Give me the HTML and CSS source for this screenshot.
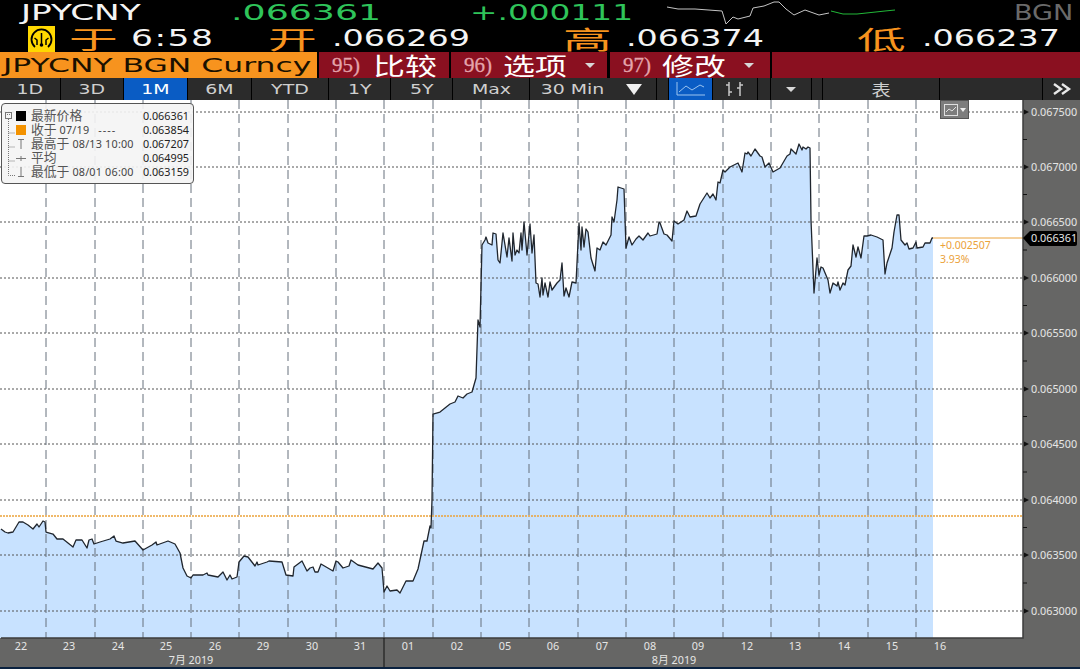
FILE: index.html
```html
<!DOCTYPE html>
<html lang="zh">
<head>
<meta charset="utf-8">
<title>JPYCNY</title>
<link rel="stylesheet" href="styles.css">
</head>
<body>
<header class="quote">
  <div class="row-top">
    <span class="big white s156">JPYCNY</span>
    <span class="big green s160">.066361</span>
    <span class="big green s146">+.000111</span>
    <svg class="spark" width="240" height="24" viewBox="665 0 240 24">
      <polyline class="spark-gray" points="667,6 678,8 695,8 722,10 726,23 733,16 738,18 750,15 753,7 764,5 774,1 779,1 786,8 794,14 805,9 819,14 829,12"/>
      <polyline class="spark-green" points="831,10 843,13 857,13 885,10 895,9"/>
    </svg>
    <span class="big gray s123">BGN</span>
  </div>
  <div class="row-stats">
    <svg class="gauge" width="27" height="26" viewBox="0 0 27 26">
      <rect width="27" height="26" fill="#ffd800"/>
      <path d="M7 21 A10 10 0 1 1 20 21" fill="none" stroke="#000" stroke-width="1.800"/>
      <path d="M13.500 7 V19 M6.500 12 L9 14 V19 M20.500 12 L18 14 V19" stroke="#000" stroke-width="1.500" fill="none"/>
      <circle cx="13.500" cy="19" r="1.800" fill="#000"/>
    </svg>
    <span class="cjk-label">于</span>
    <span class="big white s158">6:58</span>
    <span class="cjk-label">开</span>
    <span class="big white s145">.066269</span>
    <span class="cjk-label">高</span>
    <span class="big white s145">.066374</span>
    <span class="cjk-label">低</span>
    <span class="big white s145">.066237</span>
  </div>
  <div class="row-actions">
    <div class="ticker"><span class="ticker-text">JPYCNY BGN Curncy</span></div>
    <div class="action act-95"><span class="num">95)</span><span class="act-cjk">比较</span></div>
    <div class="action act-96"><span class="num">96)</span><span class="act-cjk">选项</span><i class="caret"></i></div>
    <div class="action act-97"><span class="num">97)</span><span class="act-cjk">修改</span><i class="caret"></i></div>
    <div class="action-fill"></div>
  </div>
  <nav class="tabs">
    <div class="tab w60"><span>1D</span></div>
    <div class="tab w62"><span>3D</span></div>
    <div class="tab w63 on"><span>1M</span></div>
    <div class="tab w63"><span>6M</span></div>
    <div class="tab w76"><span>YTD</span></div>
    <div class="tab w61"><span>1Y</span></div>
    <div class="tab w61"><span>5Y</span></div>
    <div class="tab w76"><span>Max</span></div>
    <div class="tab w126 period"><span>30 Min</span><i class="caret-lg"></i></div>
    <div class="tab w11"></div>
    <div class="tab w43 on">
      <svg width="30" height="14" viewBox="0 0 30 14"><path d="M1 0 V13 H29 M3 10 L10 4 L16 8 L24 3 L28 5" fill="none" stroke="#9cc4f0" stroke-width="1"/></svg>
    </div>
    <div class="tab w44">
      <svg width="22" height="16" viewBox="0 0 22 16"><path d="M5 1 V15 M2 4 H5 M5 11 H8 M16 1 V15 M13 7 H16 M16 4 H19" fill="none" stroke="#c8c8c8" stroke-width="1.500"/></svg>
    </div>
    <div class="tab w12"></div>
    <div class="tab w40"><i class="caret"></i></div>
    <div class="tab w10"></div>
    <div class="tab w116"><span class="tab-cjk">表</span></div>
    <div class="tab w102"></div>
    <div class="tab grow">
      <svg width="20" height="12" viewBox="0 0 20 12"><path d="M2 1 L9 6 L2 11 M10 1 L17 6 L10 11" fill="none" stroke="#e8e8e8" stroke-width="2.400"/></svg>
    </div>
  </nav>
</header>

<main class="chart">
  <svg class="plot" width="1080" height="569" viewBox="0 100 1080 569">
    <rect class="axis-bg" x="0" y="100" width="1080" height="567"/>
    <rect class="plot-bg" x="0" y="100" width="1023" height="538"/>
    <polygon class="area" points="0,638 0,529 5,532 8,533 13,532 19,522 23,522 28,525 33,529 37,524 39,527 43,521 45,522 46,532 53,534 57,539 63,539 73,547 76,540 82,540 87,548 89,540 92,539 94,544 100,542 110,539 114,536 116,541 123,543 135,541 143,550 152,545 156,542 157,545 168,541 175,544 180,553 183,568 187,576 191,578 193,575 203,575 207,573 208,575 218,577 223,572 227,580 230,575 232,579 237,577 239,562 244,556 248,557 255,566 257,562 258,565 267,562 269,561 282,562 286,575 293,576 294,567 302,561 307,571 310,568 313,567 315,572 318,572 321,564 333,571 336,561 338,562 343,568 349,566 351,560 358,565 373,569 378,563 382,568 384,592 387,586 390,591 397,590 400,593 406,581 413,581 418,569 424,541 427,541 430,526 431,528 432,500 433,414 440,412 445,408 450,404 455,402 458,396 463,398 467,394 472,392 476,378 478,320 480,327 482,245 485,240 486,237 488,243 492,245 493,233 496,234 498,260 500,263 503,233 507,257 509,238 512,261 513,233 515,255 517,250 519,253 521,233 522,250 524,222 527,255 530,224 532,253 534,235 536,283 538,284 540,297 542,278 543,295 545,283 548,297 550,282 552,290 557,283 560,280 562,263 564,296 566,288 569,297 572,282 576,283 579,223 581,250 582,227 584,247 586,229 588,232 591,258 595,271 597,248 600,250 603,242 606,245 611,235 612,217 614,222 617,200 618,187 624,189 626,248 629,237 632,245 636,239 639,236 643,240 648,233 650,236 657,234 659,222 660,223 664,234 667,235 672,241 674,221 678,224 684,220 687,211 690,217 696,216 700,204 707,193 710,198 713,194 716,200 718,182 720,183 723,170 725,172 730,167 738,163 742,172 745,153 747,154 748,152 751,156 755,149 760,156 762,157 765,167 769,163 773,172 780,168 787,156 790,154 791,149 796,154 799,144 802,150 803,147 806,149 808,147 810,148 811,220 814,293 817,258 819,275 821,267 823,268 828,280 830,293 833,283 837,286 838,282 840,290 843,283 845,285 848,270 851,266 853,245 856,257 858,247 861,258 864,236 867,236 871,235 877,237 883,240 885,274 887,263 892,248 894,232 897,215 899,215 901,240 905,245 907,243 909,249 913,248 916,242 917,248 923,247 925,243 930,243 932,238 933,238 933,638"/>
    <path class="grid-h" d="M0 112H1023M0 167H1023M0 222H1023M0 278H1023M0 333H1023M0 389H1023M0 444H1023M0 500H1023M0 555H1023M0 611H1023"/>
    <path class="grid-v" d="M46 100V638M95 100V638M143 100V638M191 100V638M239 100V638M288 100V638M336 100V638M384 100V638M433 100V638M481 100V638M529 100V638M578 100V638M626 100V638M674 100V638M723 100V638M771 100V638M819 100V638M868 100V638M916 100V638"/>
    <path class="prev-close" d="M0 516H1023"/>
    <path class="last-line" d="M933 238H1024"/>
    <polyline class="price" points="1,529 5,532 8,533 13,532 19,522 23,522 28,525 33,529 37,524 39,527 43,521 45,522 46,532 53,534 57,539 63,539 73,547 76,540 82,540 87,548 89,540 92,539 94,544 100,542 110,539 114,536 116,541 123,543 135,541 143,550 152,545 156,542 157,545 168,541 175,544 180,553 183,568 187,576 191,578 193,575 203,575 207,573 208,575 218,577 223,572 227,580 230,575 232,579 237,577 239,562 244,556 248,557 255,566 257,562 258,565 267,562 269,561 282,562 286,575 293,576 294,567 302,561 307,571 310,568 313,567 315,572 318,572 321,564 333,571 336,561 338,562 343,568 349,566 351,560 358,565 373,569 378,563 382,568 384,592 387,586 390,591 397,590 400,593 406,581 413,581 418,569 424,541 427,541 430,526 431,528 432,500 433,414 440,412 445,408 450,404 455,402 458,396 463,398 467,394 472,392 476,378 478,320 480,327 482,245 485,240 486,237 488,243 492,245 493,233 496,234 498,260 500,263 503,233 507,257 509,238 512,261 513,233 515,255 517,250 519,253 521,233 522,250 524,222 527,255 530,224 532,253 534,235 536,283 538,284 540,297 542,278 543,295 545,283 548,297 550,282 552,290 557,283 560,280 562,263 564,296 566,288 569,297 572,282 576,283 579,223 581,250 582,227 584,247 586,229 588,232 591,258 595,271 597,248 600,250 603,242 606,245 611,235 612,217 614,222 617,200 618,187 624,189 626,248 629,237 632,245 636,239 639,236 643,240 648,233 650,236 657,234 659,222 660,223 664,234 667,235 672,241 674,221 678,224 684,220 687,211 690,217 696,216 700,204 707,193 710,198 713,194 716,200 718,182 720,183 723,170 725,172 730,167 738,163 742,172 745,153 747,154 748,152 751,156 755,149 760,156 762,157 765,167 769,163 773,172 780,168 787,156 790,154 791,149 796,154 799,144 802,150 803,147 806,149 808,147 810,148 811,220 814,293 817,258 819,275 821,267 823,268 828,280 830,293 833,283 837,286 838,282 840,290 843,283 845,285 848,270 851,266 853,245 856,257 858,247 861,258 864,236 867,236 871,235 877,237 883,240 885,274 887,263 892,248 894,232 897,215 899,215 901,240 905,245 907,243 909,249 913,248 916,242 917,248 923,247 925,243 930,243 932,238 933,238"/>
    <path class="plot-frame" d="M1023 100V638H1"/>
    <path class="month-div" d="M384 638V667"/>
    <rect class="bottom-strip" x="0" y="667" width="1080" height="2"/>

    <path class="ticks" d="M1023 139.500h4M1023 194.500h4M1023 250h4M1023 305.500h4M1023 361h4M1023 416.500h4M1023 472h4M1023 527.500h4M1023 583h4"/>
    <path class="arrows" d="M1024 109.500l5 2.500l-5 2.500zM1024 164.500l5 2.500l-5 2.500zM1024 219.500l5 2.500l-5 2.500zM1024 275.500l5 2.500l-5 2.500zM1024 330.500l5 2.500l-5 2.500zM1024 386.500l5 2.500l-5 2.500zM1024 441.500l5 2.500l-5 2.500zM1024 497.500l5 2.500l-5 2.500zM1024 552.500l5 2.500l-5 2.500zM1024 608.500l5 2.500l-5 2.500z"/>
    <path class="last-tag" d="M1023 238L1030 231H1075Q1077 231 1077 233V244Q1077 246 1075 246H1030Z"/>

    <g class="lbl-y">
      <text x="1031" y="116">0.067500</text>
      <text x="1031" y="171">0.067000</text>
      <text x="1031" y="226">0.066500</text>
      <text x="1031" y="242">0.066361</text>
      <text x="1031" y="282">0.066000</text>
      <text x="1031" y="337">0.065500</text>
      <text x="1031" y="393">0.065000</text>
      <text x="1031" y="448">0.064500</text>
      <text x="1031" y="504">0.064000</text>
      <text x="1031" y="559">0.063500</text>
      <text x="1031" y="615">0.063000</text>
    </g>
    <g class="lbl-x">
      <text x="21" y="650">22</text><text x="69" y="650">23</text><text x="118" y="650">24</text>
      <text x="166" y="650">25</text><text x="215" y="650">26</text><text x="263" y="650">29</text>
      <text x="312" y="650">30</text><text x="360" y="650">31</text><text x="408" y="650">01</text>
      <text x="457" y="650">02</text><text x="505" y="650">05</text><text x="553" y="650">06</text>
      <text x="602" y="650">07</text><text x="650" y="650">08</text><text x="698" y="650">09</text>
      <text x="747" y="650">12</text><text x="795" y="650">13</text><text x="844" y="650">14</text>
      <text x="892" y="650">15</text><text x="940" y="650">16</text>
      <text x="191" y="664">7月 2019</text>
      <text x="674" y="664">8月 2019</text>
    </g>
    <g class="lbl-chg">
      <text x="940" y="249">+0.002507</text>
      <text x="940" y="263">3.93%</text>
    </g>
  </svg>

  <aside class="legend">
    <svg class="lg-tree" width="14" height="70" viewBox="0 0 14 70">
      <rect x="3.500" y="3.500" width="6" height="6" fill="none" stroke="#777"/>
      <path d="M5 5.500H8M6.500 10V66.500H13M6.500 24H13M6.500 38H13M6.500 52H13" fill="none" stroke="#777" stroke-dasharray="1 1"/>
    </svg>
    <div class="lg-row"><i class="mark mark-black"></i><span class="lg-name"><b class="lg-cjk">最新价格</b></span><span class="lg-val">0.066361</span></div>
    <div class="lg-row"><i class="mark mark-orange"></i><span class="lg-name"><b class="lg-cjk">收于</b> 07/19 <span class="lg-dash">----</span></span><span class="lg-val">0.063854</span></div>
    <div class="lg-row"><svg class="mark" width="10" height="12" viewBox="0 0 10 12"><path d="M2 1.500H8M5 1.500V11" fill="none" stroke="#777"/></svg><span class="lg-name"><b class="lg-cjk">最高于</b> 08/13 10:00</span><span class="lg-val">0.067207</span></div>
    <div class="lg-row"><svg class="mark" width="10" height="12" viewBox="0 0 10 12"><path d="M0 6.500H10M5 4V9" fill="none" stroke="#777"/></svg><span class="lg-name"><b class="lg-cjk">平均</b></span><span class="lg-val">0.064995</span></div>
    <div class="lg-row"><svg class="mark" width="10" height="12" viewBox="0 0 10 12"><path d="M2 10.500H8M5 10.500V1" fill="none" stroke="#777"/></svg><span class="lg-name"><b class="lg-cjk">最低于</b> 08/01 06:00</span><span class="lg-val">0.063159</span></div>
  </aside>

  <div class="widget">
    <svg width="14" height="12" viewBox="0 0 14 12"><rect x="0.500" y="0.500" width="13" height="11" fill="none" stroke="#e0e0e0"/><path d="M2 8 L5 5 L8 7 L12 3" fill="none" stroke="#e0e0e0"/></svg>
    <i class="widget-caret"></i>
  </div>
</main>
</body>
</html>
```
FILE: styles.css
```css
* { box-sizing: border-box; }
html, body { margin: 0; padding: 0; background: #000; }
body { width: 1080px; height: 669px; overflow: hidden; font-family: "DejaVu Sans", sans-serif; }

.quote { display: block; height: 100px; background: #000; }

.row-top, .row-stats { display: grid; align-items: center; }
.row-top { height: 25px; padding-left: 21px; grid-template-columns: 210px 239px 195px 349px auto; }
.row-stats { height: 27px; padding-left: 28px; grid-template-columns: 41px 62px 137px 64px 231px 63px 231px 65px auto; }

.big { display: inline-block; font-size: 22px; line-height: 25px; transform-origin: left center; white-space: nowrap; }
.row-stats .big { font-size: 23px; }
.white { color: #f4f4f4; }
.green { color: #2fc45a; }
.gray { color: #6a6a6a; }
.s123 { transform: scaleX(1.23); }
.s145 { transform: scaleX(1.45); }
.s146 { transform: scaleX(1.49); }
.s156 { transform: scaleX(1.56); }
.s158 { transform: scaleX(1.5); letter-spacing: 1px; }
.s160 { transform: scaleX(1.65); }

.spark { display: block; }
.spark-gray, .spark-green { fill: none; stroke-width: 1; }
.spark-gray { stroke: #c4c4c4; }
.spark-green { stroke: #22b838; }
.gauge { display: block; }

.cjk-label {
  display: inline-block; font-family: "Noto Sans CJK SC", sans-serif; font-size: 25px; line-height: 27px;
  color: #f7931e; transform: scaleX(1.95); transform-origin: left center;
}

.row-actions { display: flex; height: 26px; gap: 2px; background: #000; }
.ticker { width: 317px; background: #f7931e; display: flex; align-items: center; padding-left: 3px; }
.ticker-text { display: inline-block; font-size: 20px; color: #1a1000; white-space: nowrap; transform: scaleX(1.57); transform-origin: left center; }
.action { display: flex; align-items: center; background: #8a1020; height: 26px; }
.act-95 { width: 130px; padding-left: 13px; }
.act-95 .num { width: 41px; }
.act-96 { width: 156px; padding-left: 13px; }
.act-97 { width: 160px; padding-left: 13px; margin-left: 1px; }
.action-fill { flex: 1; background: #8a1020; }
.num { width: 39px; font-family: "Liberation Serif", serif; font-size: 21px; color: #e4a4ac; -webkit-text-stroke: 0.3px #e4a4ac; }
.act-cjk { width: 76px; display: inline-block; font-family: "Noto Sans CJK SC", sans-serif; font-size: 24px; line-height: 26px; color: #fff; transform: scaleX(1.33); transform-origin: left center; }
.caret { display: inline-block; width: 0; height: 0; border: 5px solid transparent; border-top: 5px solid #d8d8d8; border-bottom: 0; }
.act-96 .caret, .act-97 .caret { margin-left: 6px; }

.tabs { display: flex; height: 22px; gap: 1px; background: #000; }
.tab { display: flex; align-items: center; justify-content: center; height: 22px; background: #2b2b2b; color: #cfcfcf; font-size: 14px; }
.tab > span { display: inline-block; transform: scaleX(1.35); white-space: nowrap; }
.tab > .tab-cjk { font-family: "Noto Sans CJK SC", sans-serif; font-size: 16px; transform: scaleX(1.2); }
.tab.on { background: #0a5cc4; color: #fff; }
.period { justify-content: flex-start; padding-left: 19px; }
.caret-lg { display: inline-block; width: 0; height: 0; margin-left: 30px; border: 8px solid transparent; border-top: 11px solid #f0f0f0; border-bottom: 0; }
.w10 { width: 10px; } .w11 { width: 11px; } .w12 { width: 12px; } .w40 { width: 40px; } .w43 { width: 43px; } .w44 { width: 44px; }
.w60 { width: 60px; } .w61 { width: 61px; } .w62 { width: 62px; } .w63 { width: 63px; } .w76 { width: 76px; }
.w102 { width: 102px; } .w116 { width: 116px; } .w126 { width: 126px; }
.grow { flex: 1; }

.chart { position: relative; height: 569px; overflow: hidden; }
.plot { display: block; }
.axis-bg { fill: #666665; }
.plot-bg { fill: #fff; }
.area { fill: #c8e2ff; }
.grid-h { fill: none; stroke: #555; stroke-width: 1; stroke-dasharray: 2 2; }
.grid-v { fill: none; stroke: #66707c; stroke-width: 1; stroke-dasharray: 9 5; }
.prev-close { fill: none; stroke: #eba23a; stroke-width: 1.500; stroke-dasharray: 2 1; }
.last-line { fill: none; stroke: #eba23a; stroke-width: 1; }
.price { fill: none; stroke: #20262e; stroke-width: 1.300; stroke-linejoin: round; }
.plot-frame { fill: none; stroke: #3c3c3c; stroke-width: 1.500; }
.month-div { stroke: #111; stroke-width: 1; }
.bottom-strip { fill: #0b2240; }
.ticks { stroke: #111; stroke-width: 1; }
.arrows { fill: #111; }
.last-tag { fill: #000; }

.lbl-y text, .lbl-x text { font-family: "Noto Sans", "Noto Sans CJK SC", sans-serif; font-size: 10.800px; fill: #e6e6e6; }
.lbl-x text { text-anchor: middle; }
.lbl-chg text { font-family: "Noto Sans", sans-serif; font-size: 10.500px; fill: #eba23a; }

.legend {
  position: absolute; left: 1px; top: 3px; width: 193px; height: 81px; padding: 5px 4px 3px 14px;
  background: rgba(244, 244, 244, 0.9); border: 1px solid #555; border-radius: 4px;
  font-family: "Noto Sans", "Noto Sans CJK SC", sans-serif; font-size: 10.800px; line-height: 14px; color: #444;
}
.lg-tree { position: absolute; left: 0; top: 5px; }
.lg-row { display: flex; align-items: center; height: 14px; white-space: nowrap; }
.mark { flex: none; display: block; width: 10px; height: 10px; margin-right: 5px; }
svg.mark { height: 12px; }
.mark-black { background: #000; }
.mark-orange { background: #f39200; }
.lg-name { flex: 1; letter-spacing: 0.2px; }
.lg-cjk { font-family: "Noto Sans CJK SC", sans-serif; font-size: 12.800px; line-height: 0; letter-spacing: 0; font-weight: 400; color: #555; }
.lg-dash { margin-left: 6px; letter-spacing: 1px; }
.lg-val { flex: none; color: #222; }

.widget { position: absolute; left: 940px; top: 0; width: 29px; height: 19px; background: #7d7d7d; border: 1px solid #555; display: flex; align-items: center; padding-left: 3px; gap: 2px; }
.widget svg { display: block; }
.widget-caret { width: 0; height: 0; border: 3px solid transparent; border-top: 4px solid #eee; border-bottom: 0; }
```
